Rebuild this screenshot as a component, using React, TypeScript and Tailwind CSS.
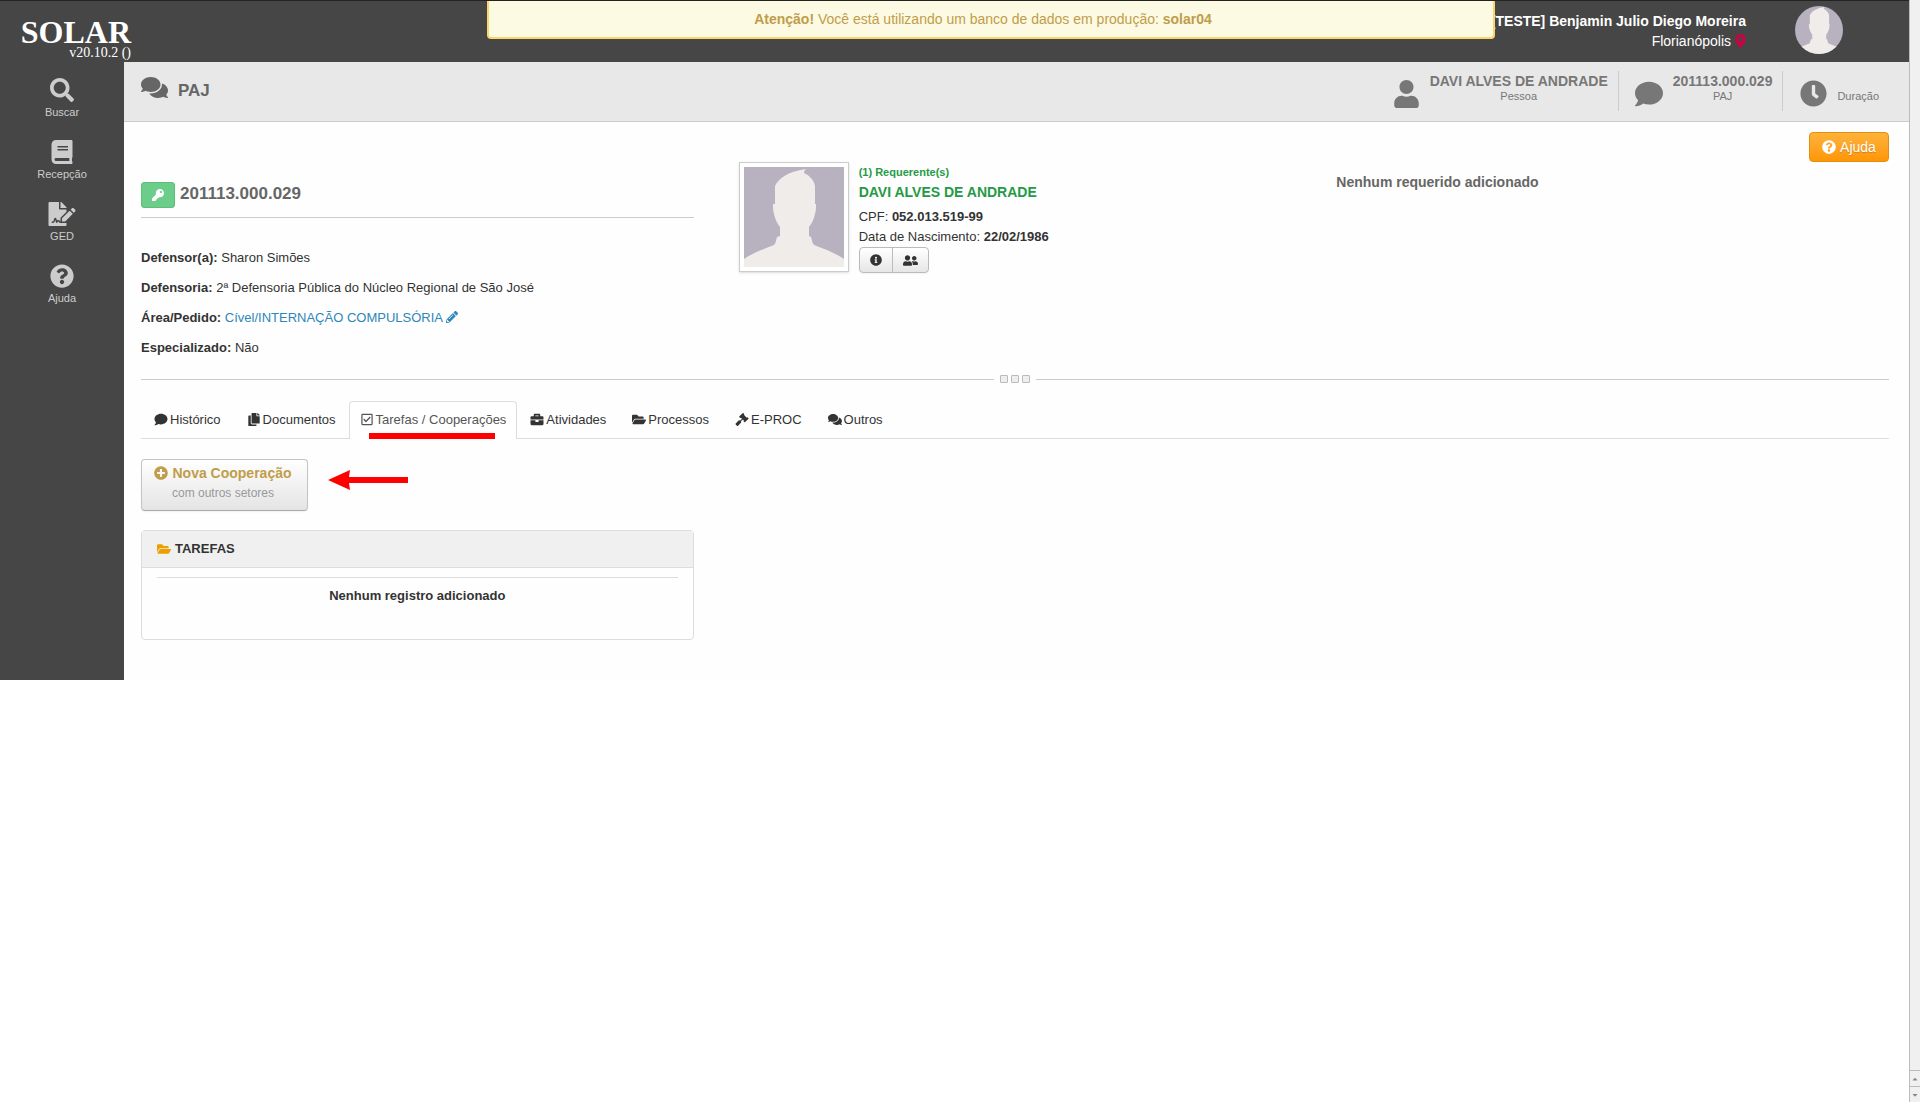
import type { ReactNode } from "react";
import {
  FaSearch, FaBook, FaFileSignature, FaQuestionCircle, FaComments, FaUser, FaComment, FaClock,
  FaMapMarkerAlt, FaKey, FaPencilAlt, FaInfoCircle, FaUserFriends, FaCopy, FaRegCheckSquare,
  FaBriefcase, FaFolderOpen, FaGavel, FaPlusCircle, FaCaretUp, FaCaretDown,
} from "react-icons/fa";

function Silhouette({ className }: { className: string }) {
  return (
    <svg viewBox="0 0 100 100" className={className} aria-hidden="true">
      <rect width="100" height="100" fill="#b8b1c0" />
      <path
        d="M0 100V92C8 86 20 82 30 78C32 76 32 73 33 70L36 69L36 60C33 56 31 52 30 47C29 44 29 40 29 37H31V19C35 11 43 5 62 2C60 4 60 5 60 6C65 8 70 13 71 19V37H72C72 40 72 44 71 47C70 52 68 56 65 60L65 69L67 70C68 73 68 76 70 78C80 82 92 86 100 92V100Z"
        fill="#f0ecea"
      />
    </svg>
  );
}

const menu = [
  { label: "Buscar", Icon: FaSearch },
  { label: "Recepção", Icon: FaBook },
  { label: "GED", Icon: FaFileSignature },
  { label: "Ajuda", Icon: FaQuestionCircle },
];

const tabs = [
  { label: "Histórico", Icon: FaComment },
  { label: "Documentos", Icon: FaCopy },
  { label: "Tarefas / Cooperações", Icon: FaRegCheckSquare, active: true },
  { label: "Atividades", Icon: FaBriefcase },
  { label: "Processos", Icon: FaFolderOpen },
  { label: "E-PROC", Icon: FaGavel },
  { label: "Outros", Icon: FaComments },
];

function Field({ label, children }: { label: string; children: ReactNode }) {
  return (
    <p className="mb-[10px]">
      <strong>{label}:</strong> {children}
    </p>
  );
}

function Header() {
  return (
    <header className="relative flex h-[62px] justify-between border-t border-[#222] bg-[#464646] text-white">
      <div className="w-[131px] pt-[18px] text-right font-['Liberation_Serif',serif]">
        <h1 className="text-[32px] leading-[26px] font-bold">SOLAR</h1>
        <p className="text-sm leading-[16px]">v20.10.2 ()</p>
      </div>
      <div className="flex pr-[66px]">
        <div className="mr-[49px] pt-[10px] text-right text-sm leading-5">
          <p className="font-bold">[TESTE] Benjamin Julio Diego Moreira</p>
          <p className="flex items-center justify-end gap-1">
            Florianópolis <FaMapMarkerAlt className="h-[14px] w-[11px] text-[#cc0044]" />
          </p>
        </div>
        <Silhouette className="mt-[5px] size-12 rounded-full" />
      </div>
      <div
        role="alert"
        className="absolute top-0 left-[487px] right-[414px] h-[38px] rounded-b-[4px] border-2 border-t-0 border-[#fcd66c] bg-[#fcfae3] pt-2 pr-8 pl-4 text-center text-sm leading-5 text-[#c09d4a]"
      >
        <strong>Atenção!</strong> Você está utilizando um banco de dados em produção: <strong>solar04</strong>
      </div>
    </header>
  );
}

function TitleBar() {
  return (
    <div className="flex h-[60px] justify-between border-b border-[#ccc] bg-[#e8e8e8] pr-[30px] pl-[17px] text-[#777]">
      <h2 className="flex gap-[10px] pt-3 text-[17px] leading-[33px] font-bold text-[#666]">
        <FaComments className="size-[27px]" />
        PAJ
      </h2>
      <ul className="flex pt-[9px] text-center text-[11px]">
        <li className="flex h-10 border-r border-[#ccc] pr-[10px]">
          <FaUser className="mt-[9px] mr-[11px] h-[28px] w-[25px]" />
          <div>
            <strong className="block text-sm leading-5">DAVI ALVES DE ANDRADE</strong>
            <span className="block leading-[11px]">Pessoa</span>
          </div>
        </li>
        <li className="flex h-10 border-r border-[#ccc] pr-[10px] pl-4">
          <FaComment className="mt-[9px] mr-[10px] size-[28px]" />
          <div>
            <strong className="block text-sm leading-5">201113.000.029</strong>
            <span className="block leading-[11px]">PAJ</span>
          </div>
        </li>
        <li className="flex h-10 pl-[17px]">
          <FaClock className="mt-[9px] mr-[10px] size-[27px]" />
          <span className="pt-5 leading-[11px]">Duração</span>
        </li>
      </ul>
    </div>
  );
}

function Summary() {
  return (
    <section className="grid grid-cols-3 gap-x-[45px]">
      <div>
        <div className="mt-5 flex h-[36px] gap-[5px] border-b border-[#ccc]">
          <button
            type="button"
            aria-label="Chave"
            className="flex h-[26px] w-[34px] items-center justify-center rounded-[3px] border border-[#5fbd7b] bg-[#6bcd89] text-white"
          >
            <FaKey className="size-3" />
          </button>
          <h3 className="text-[17px] leading-[24px] font-bold text-[#666]">201113.000.029</h3>
        </div>
        <div className="mt-[30px]">
          <Field label="Defensor(a)">Sharon Simões</Field>
          <Field label="Defensoria">2ª Defensoria Pública do Núcleo Regional de São José</Field>
          <Field label="Área/Pedido">
            <a href="#pedido" className="text-[#2f87b7]">
              Cível/INTERNAÇÃO COMPULSÓRIA <FaPencilAlt className="inline size-3 align-[-1px]" />
            </a>
          </Field>
          <Field label="Especializado">Não</Field>
        </div>
      </div>
      <div className="flex gap-[10px]">
        <div className="size-[110px] shrink-0 border border-[#ccc] bg-white p-1 shadow-sm">
          <Silhouette className="size-full" />
        </div>
        <div>
          <p className="text-[11px] leading-5 font-bold text-[#259a45]">(1) Requerente(s)</p>
          <p className="text-sm leading-5 font-bold text-[#259a45]">DAVI ALVES DE ANDRADE</p>
          <p className="mt-[5px]">CPF: <strong>052.013.519-99</strong></p>
          <p>Data de Nascimento: <strong>22/02/1986</strong></p>
          <div className="flex h-[26px] w-[70px] divide-x divide-[#bbb] rounded-[4px] border border-[#bbb] bg-linear-to-b from-white to-[#e6e6e6] shadow-xs">
            <button type="button" aria-label="Informações" className="flex w-[33px] items-center justify-center">
              <FaInfoCircle className="size-3" />
            </button>
            <button type="button" aria-label="Pessoas" className="flex flex-1 items-center justify-center">
              <FaUserFriends className="size-[15px]" />
            </button>
          </div>
        </div>
      </div>
      <p className="pt-[10px] text-sm leading-5 font-bold text-[#666]">Nenhum requerido adicionado</p>
    </section>
  );
}

function Splitter() {
  return (
    <div className="mt-[7px] flex items-center gap-[6px]">
      <span className="h-px flex-1 bg-[#ccc]" />
      <span className="flex gap-[3px]">
        {[0, 1, 2].map((n) => (
          <span key={n} className="size-2 rounded-[1px] border border-[#bbb] bg-[#eee]" />
        ))}
      </span>
      <span className="h-px flex-1 bg-[#ccc]" />
    </div>
  );
}

function Tabs() {
  return (
    <nav className="mt-[18px] flex border-b border-[#ddd]">
      {tabs.map(({ label, Icon, active }) => (
        <a
          key={label}
          href="#aba"
          className={
            active
              ? "relative -mb-px flex h-[38px] items-center gap-[2px] rounded-t-[4px] border border-b-0 border-[#ddd] bg-white px-[10px] pb-[2px] text-[#555]"
              : "flex h-[37px] items-center gap-[2px] px-[13px]"
          }
        >
          <Icon className="h-[13px] w-[14px]" />
          {label}
          {active && <span className="absolute right-[21px] bottom-0 left-[19px] h-[6px] bg-[#ff0000]" />}
        </a>
      ))}
    </nav>
  );
}

function Tasks() {
  return (
    <>
      <div className="mt-5 flex items-start gap-5">
        <button
          type="button"
          className="h-[52px] w-[167px] rounded-[4px] border border-[#c4c4c4] border-b-[#aaa] bg-linear-to-b from-white to-[#e4e4e4] pr-[3px] pb-[4px] shadow-xs"
        >
          <span className="flex items-center justify-center gap-1 text-sm leading-5 font-bold text-[#c09d4a]">
            <FaPlusCircle className="size-[14px]" />
            Nova Cooperação
          </span>
          <span className="block text-xs leading-5 text-[#999]">com outros setores</span>
        </button>
        <svg viewBox="0 0 80 20" className="mt-[11px] h-5 w-20" aria-hidden="true">
          <path d="M0 10L22 0L21 7H80V13H21L22 20Z" fill="#ff0000" />
        </svg>
      </div>
      <div className="mt-[19px] grid grid-cols-3 gap-x-[45px]">
        <section className="h-[110px] rounded-[4px] border border-[#ddd]">
          <h4 className="flex h-[37px] items-center gap-1 border-b border-[#ddd] bg-[#f0f0f0] px-[15px] font-bold">
            <FaFolderOpen className="size-[14px] text-[#e9a000]" />
            TAREFAS
          </h4>
          <p className="mx-[15px] mt-[9px] border-t border-[#ddd] pt-2 text-center font-bold">
            Nenhum registro adicionado
          </p>
        </section>
      </div>
    </>
  );
}

export default function App() {
  return (
    <div className="flex min-h-screen bg-white font-['Liberation_Sans',Arial,sans-serif] text-[13px] leading-5 text-[#333]">
      <div className="min-w-0 flex-1">
        <Header />
        <div className="flex">
          <aside className="w-[124px] bg-[#464646] pt-4 text-[11px] text-[#ccc]">
            {menu.map(({ label, Icon }) => (
              <a key={label} href="#menu" className="flex h-[62px] flex-col items-center">
                <Icon className="h-6 w-7" />
                <span className="leading-5">{label}</span>
              </a>
            ))}
          </aside>
          <div className="min-w-0 flex-1">
            <TitleBar />
            <main className="bg-[#fefefe] pt-[10px] pr-5 pb-10 pl-[17px]">
              <div className="flex justify-end">
                <button
                  type="button"
                  className="flex h-[30px] w-20 items-center justify-center gap-1 rounded-[4px] border border-[#e08f10] bg-linear-to-b from-[#fdb338] to-[#ff9600] text-sm text-white text-shadow-xs"
                >
                  <FaQuestionCircle className="size-[14px]" />
                  Ajuda
                </button>
              </div>
              <Summary />
              <Splitter />
              <Tabs />
              <Tasks />
            </main>
          </div>
        </div>
      </div>
      <div className="flex w-[11px] flex-col justify-end border-l border-[#bbb] bg-[#f0f0f0] text-[#888]">
        <button type="button" aria-label="Subir" className="flex h-4 items-center justify-center border-t border-[#bbb]">
          <FaCaretUp className="size-2" />
        </button>
        <button type="button" aria-label="Descer" className="flex h-4 items-center justify-center border-t border-[#bbb]">
          <FaCaretDown className="size-2" />
        </button>
      </div>
    </div>
  );
}
